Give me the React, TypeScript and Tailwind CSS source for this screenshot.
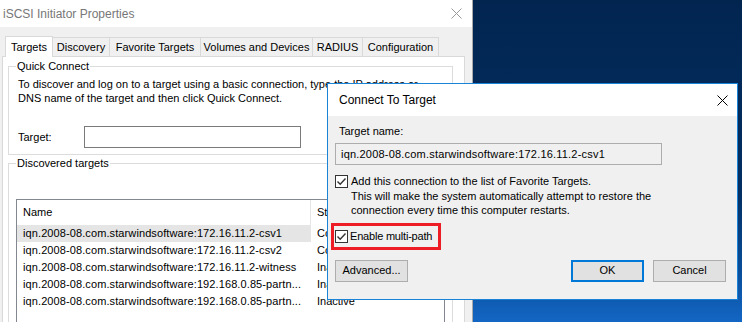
import React from 'react';

const font = { fontFamily: '"Liberation Sans", Arial, sans-serif' };

function CloseX({ color = '#000' }: { color?: string }) {
  return (
    <svg width="11" height="11" viewBox="0 0 11 11">
      <path d="M0.5 0.5 L10.5 10.5 M10.5 0.5 L0.5 10.5" stroke={color} strokeWidth="1" />
    </svg>
  );
}

function Check() {
  return (
    <div className="w-[13px] h-[13px] border border-[#333] bg-white flex items-center justify-center shrink-0">
      <svg width="11" height="11" viewBox="0 0 11 11">
        <path d="M1.5 5.5 L4.2 8.2 L9.5 2.5" stroke="#333" strokeWidth="1.4" fill="none" />
      </svg>
    </div>
  );
}

const rows = [
  ['iqn.2008-08.com.starwindsoftware:172.16.11.2-csv1', 'Connected'],
  ['iqn.2008-08.com.starwindsoftware:172.16.11.2-csv2', 'Connected'],
  ['iqn.2008-08.com.starwindsoftware:172.16.11.2-witness', 'Inactive'],
  ['iqn.2008-08.com.starwindsoftware:192.168.0.85-partn...', 'Inactive'],
  ['iqn.2008-08.com.starwindsoftware:192.168.0.85-partn...', 'Inactive'],
];

const tabs: [string, string][] = [
  ['Discovery', 'w-[57px]'],
  ['Favorite Targets', 'w-[91px]'],
  ['Volumes and Devices', 'w-[112px]'],
  ['RADIUS', 'w-[50px]'],
  ['Configuration', 'w-[76px]'],
];

export default function App() {
  return (
    <div
      className="relative w-[742px] h-[322px] overflow-hidden text-[11px] text-black whitespace-nowrap bg-[linear-gradient(180deg,#022550_0%,#032f63_60%,#0a4f9c_85%,#1366c4_100%)]"
      style={font}
    >
      {/* back window */}
      <div className="absolute left-0 top-0 w-[473px] h-[322px] bg-[#f0f0f0] border-r border-[#aaa] flex flex-col">
        <div className="h-[27px] bg-white flex items-center justify-between pl-[3px] pr-[10px] shrink-0">
          <span className="text-[#777] text-[12px]">iSCSI Initiator Properties</span>
          <CloseX color="#999" />
        </div>
        <div className="flex items-end pl-[5px] mt-[8px] h-[21px] shrink-0">
          <div className="w-[48px] h-[21px] bg-white border border-b-0 border-[#d9d9d9] flex items-center justify-center relative z-10 -mb-px">
            Targets
          </div>
          {tabs.map(([t, w]) => (
            <div key={t} className={`${w} h-[19px] border border-l-0 border-b-0 border-[#d9d9d9] flex items-center justify-center`}>
              {t}
            </div>
          ))}
        </div>
        <div className="ml-[2px] w-[463px] flex-1 bg-white border border-[#d9d9d9] pt-[9px] pl-[5px] pr-[11px]">
          <div className="relative border border-[#dcdcdc] h-[89px] pl-[9px] pt-[10px]">
            <span className="absolute -top-[8px] left-[7px] bg-white px-[1px] leading-[14px]">Quick Connect</span>
            <p className="leading-[14px]">
              To discover and log on to a target using a basic connection, type the IP address or
              <br />
              DNS name of the target and then click Quick Connect.
            </p>
            <div className="flex items-center mt-[21px]">
              <span className="w-[66px]">Target:</span>
              <div className="w-[217px] h-[22px] border border-[#7a7a7a] bg-white" />
            </div>
          </div>
          <div className="relative border border-[#dcdcdc] h-[200px] mt-[8px] pl-[7px] pr-[7px] pt-[35px]">
            <span className="absolute -top-[8px] left-[7px] bg-white px-[1px] leading-[14px]">Discovered targets</span>
            <div className="border border-[#828790] h-[150px] overflow-hidden">
              <div className="flex h-[25px] items-center">
                <div className="w-[294px] h-full border-r border-[#e5e5e5] flex items-center pl-[6px]">Name</div>
                <div className="pl-[6px]">Status</div>
              </div>
              {rows.map(([n, s], i) => (
                <div key={i} className="flex h-[17px] items-center">
                  <div className={`w-[294px] h-full flex items-center pl-[6px] tracking-[0.1px] ${i === 0 ? 'bg-[#e5e5e5]' : ''}`}>
                    {n}
                  </div>
                  <div className="pl-[6px]">{s}</div>
                </div>
              ))}
            </div>
          </div>
        </div>
      </div>

      {/* Connect To Target dialog */}
      <div className="absolute left-[327px] top-[83px] w-[411px] h-[217px] border border-[#1883d7] bg-[#f0f0f0] flex flex-col">
        <div className="h-[32px] bg-white flex items-center justify-between pl-[11px] pr-[9px] shrink-0">
          <span className="text-[12px]">Connect To Target</span>
          <CloseX />
        </div>
        <div className="pl-[7px] pr-[75px] pt-[8px] flex flex-col">
          <span className="pl-[4px] leading-[14px]">Target name:</span>
          <div className="mt-[5px] h-[22px] border border-[#adadad] bg-[#f0f0f0] flex items-center pl-[5px] tracking-[0.2px]">
            iqn.2008-08.com.starwindsoftware:172.16.11.2-csv1
          </div>
          <div className="flex items-start gap-[3px] mt-[10px]">
            <Check />
            <div className="leading-[14.5px] -mt-[1px]">
              Add this connection to the list of Favorite Targets.
              <br />
              This will make the system automatically attempt to restore the
              <br />
              connection every time this computer restarts.
            </div>
          </div>
          <div className="mt-[5px] -ml-[4px] w-[110px] h-[27px] border-[3px] border-[#ee1c24] flex items-center pl-[1px] gap-[2px]">
            <Check />
            <span className="tracking-[-0.2px]">Enable multi-path</span>
          </div>
        </div>
        <div className="flex items-center mt-[10px] pl-[7px] pr-[11px]">
          <div className="w-[73px] h-[22px] border border-[#adadad] bg-[#e1e1e1] flex items-center justify-center">
            <span>Advanced...</span>
          </div>
          <div className="flex-1" />
          <div className="w-[73px] h-[22px] border-2 border-[#0078d7] bg-[#e1e1e1] flex items-center justify-center">
            OK
          </div>
          <div className="w-[73px] h-[22px] ml-[9px] border border-[#adadad] bg-[#e1e1e1] flex items-center justify-center">
            Cancel
          </div>
        </div>
      </div>
    </div>
  );
}
